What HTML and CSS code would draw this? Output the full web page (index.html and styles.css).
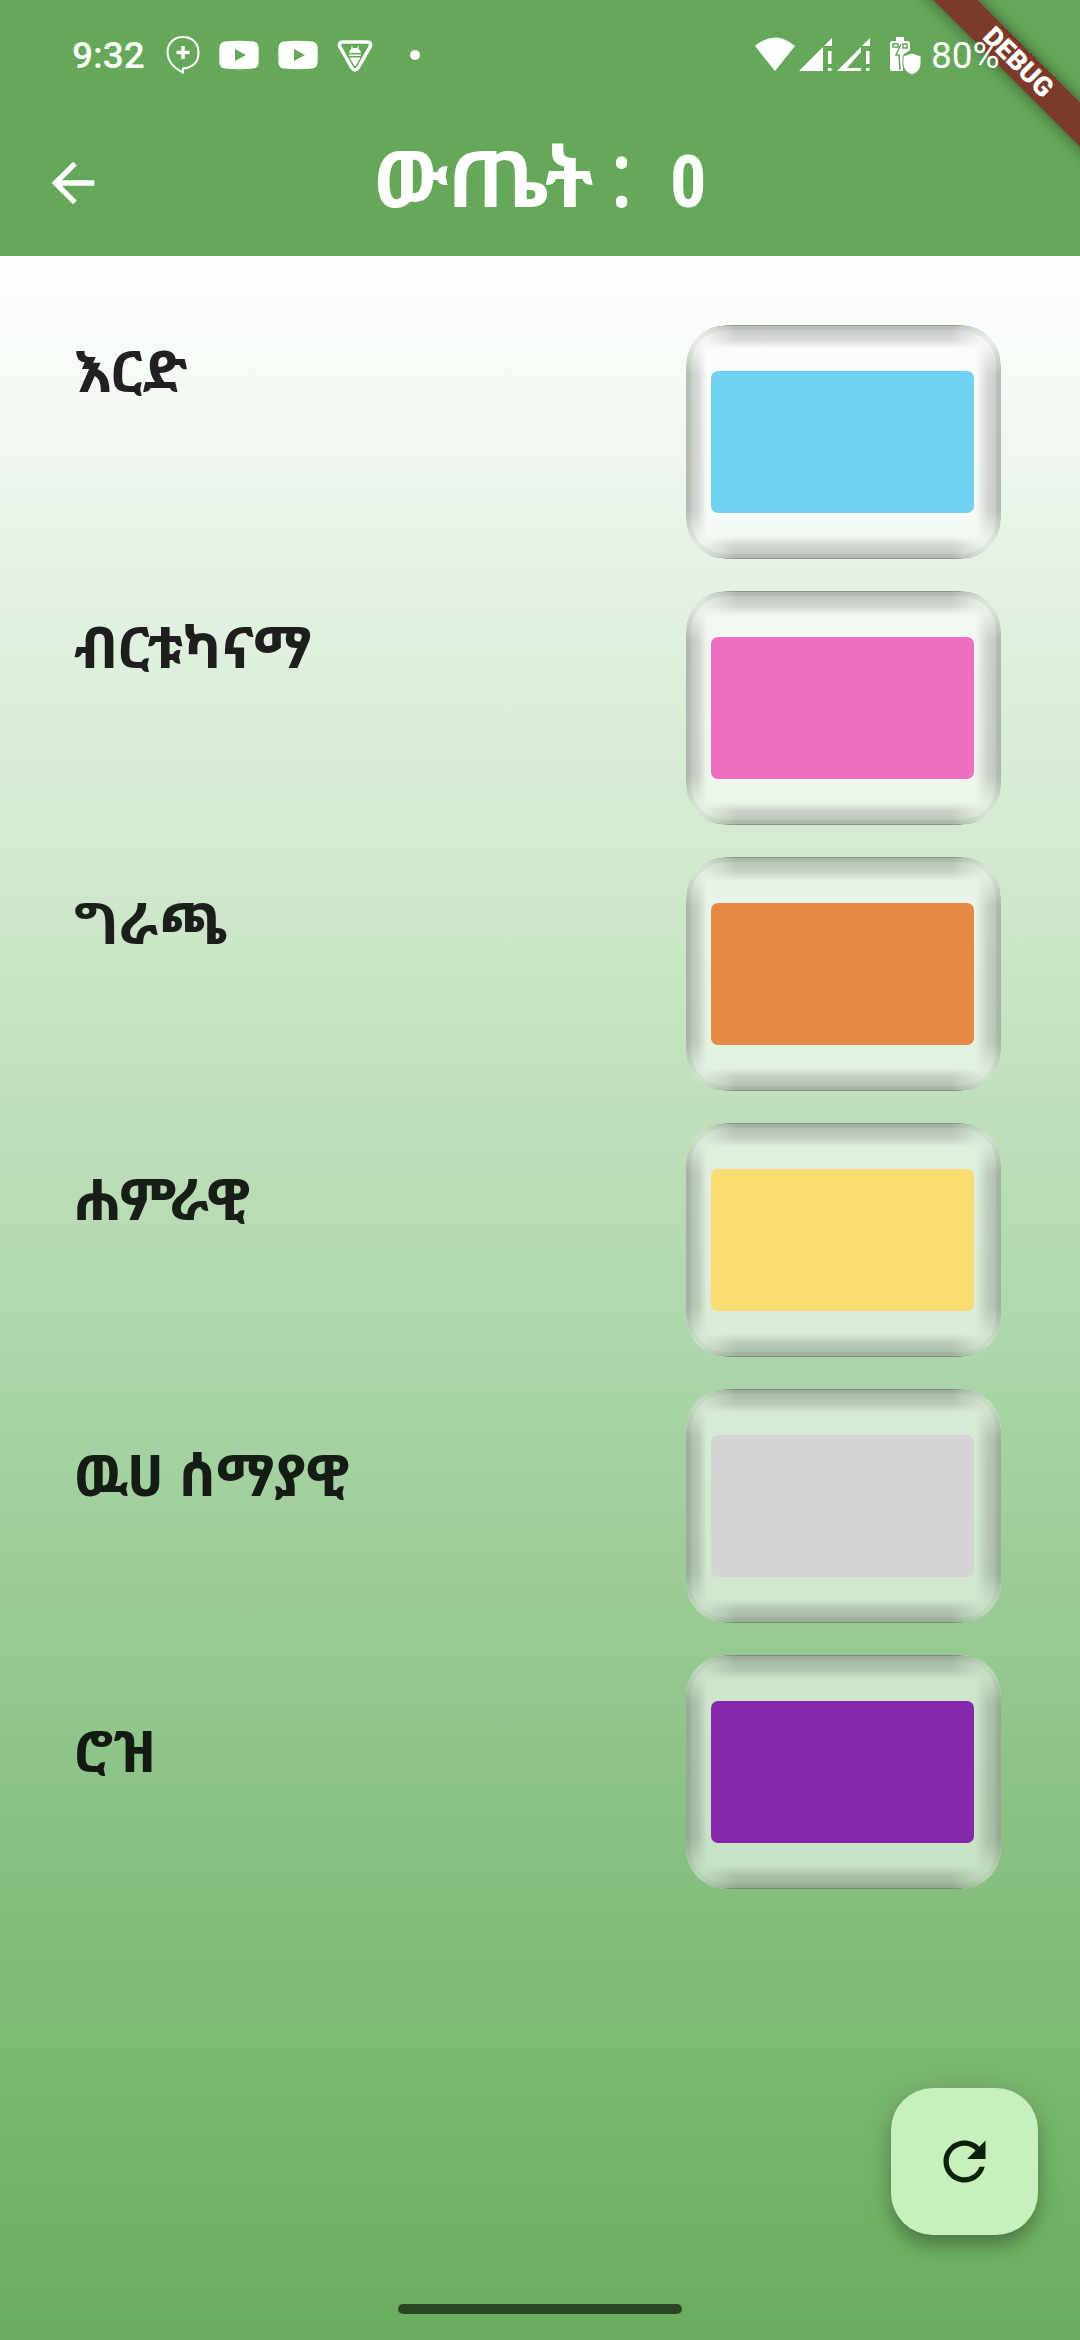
FILE: index.html
```
<!DOCTYPE html>
<html lang="am">
<head>
<meta charset="utf-8">
<meta name="viewport" content="width=device-width, initial-scale=1">
<title>ውጤት</title>
<link rel="stylesheet" href="styles.css">
</head>
<body>
<div class="screen">
  <header class="top">
    <div class="status">
      <span class="clock">9:32</span>
      <div class="notifications">
        <svg width="34" height="40" viewBox="0 0 34 40" fill="none" stroke="#fff" stroke-width="2"><path d="M17 37.500V33.500Q32.500 32 32.500 17.500C32.500 8 26 2 17 2S1.500 8 1.500 17.500Q2 30 17 37.500Z"/><path d="M17 11v13M10.500 17.500h13" stroke-width="3.500"/></svg>
        <svg width="40" height="40" viewBox="0 0 40 40" fill="#fff"><path fill-rule="evenodd" d="M6 6.500Q20 5 34 6.500Q39 7 39.500 12Q40 20 39.500 28Q39 33 34 33.500Q20 35 6 33.500Q1 33 .5 28Q0 20 .5 12Q1 7 6 6.500ZM16 14v12l11-6Z"/></svg>
        <svg width="40" height="40" viewBox="0 0 40 40" fill="#fff"><path fill-rule="evenodd" d="M6 6.500Q20 5 34 6.500Q39 7 39.500 12Q40 20 39.500 28Q39 33 34 33.500Q20 35 6 33.500Q1 33 .5 28Q0 20 .5 12Q1 7 6 6.500ZM16 14v12l11-6Z"/></svg>
        <svg width="36" height="40" viewBox="0 0 36 40"><path d="M6 7H30Q35 7 33 12L21 33Q18 37 15 33L3 12Q1 7 6 7Z" fill="none" stroke="#fff" stroke-width="3.500"/><path d="M12 18Q13 13 18 13T24 18ZM12 19.500h12v1.500H12ZM12.500 22.500h11L18.500 31h-1Z" fill="#fff"/><path d="M15 11v3M21 11v3" stroke="#fff"/></svg>
        <svg class="more" width="10" height="10" viewBox="0 0 10 10"><circle cx="5" cy="5" r="5" fill="#fff"/></svg>
      </div>
      <div class="system">
        <svg width="40" height="40" viewBox="0 0 40 40"><path d="M0 11Q20-6 40 11L20 36Z" fill="#fff"/></svg>
        <svg width="34" height="40" viewBox="0 0 34 40" fill="#fff"><path d="M0 36 24 12V36ZM25 11 33 3V11ZM29 16h3.500v13H29ZM29 33h3.500v3H29Z"/></svg>
        <svg width="34" height="40" viewBox="0 0 34 40" fill="#fff"><path fill-rule="evenodd" d="M0 36 24 12V17L10 33H24V36ZM25 11 33 3V11ZM29 16h3.500v13H29ZM29 33h3.500v3H29Z"/></svg>
        <svg class="battery" width="32" height="40" viewBox="0 0 32 40"><path d="M3 6H7V2H15V6H18Q21 6 21 9V15L14 20V36H3Q1 36 1 33V9Q1 6 3 6Z" fill="#fff"/><path d="M4 9H9V12H4ZM14 9h4v4h-4ZM12 9 7 20H10L11 35" fill="none" stroke="#66a85a" stroke-width="1.500"/><path d="M23 18 32 21V29Q32 36 23 40Q14 36 14 29V21Z" fill="#fff" stroke="#66a85a"/></svg>
        <span class="level">80%</span>
      </div>
    </div>
    <div class="bar">
      <button class="back" type="button" aria-label="Back"><svg width="64" height="64" viewBox="0 0 24 24" fill="#fff"><path d="M20 11H7.830l5.590-5.590L12 4l-8 8 8 8 1.410-1.410L7.830 13H20v-2z"/></svg></button>
      <h1 class="title">ውጤት<span class="colon">:</span><span class="score">0</span></h1>
    </div>
  </header>
  <main class="board">
    <ul class="labels">
      <li>እርድ</li>
      <li>ብርቱካናማ</li>
      <li>ግራጫ</li>
      <li>ሐምራዊ</li>
      <li>ዉሀ ሰማያዊ</li>
      <li>ሮዝ</li>
    </ul>
    <ul class="cards">
      <li class="card"><div class="swatch sky"></div></li>
      <li class="card"><div class="swatch pink"></div></li>
      <li class="card"><div class="swatch orange"></div></li>
      <li class="card"><div class="swatch yellow"></div></li>
      <li class="card"><div class="swatch grey"></div></li>
      <li class="card"><div class="swatch purple"></div></li>
    </ul>
  </main>
  <button class="refresh" type="button" aria-label="Restart"><svg width="63" height="63" viewBox="0 0 24 24" fill="#0a2209"><path d="M17.650 6.350C16.200 4.900 14.210 4 12 4c-4.420 0-7.990 3.580-7.990 8s3.570 8 7.990 8c3.730 0 6.840-2.550 7.730-6h-2.080c-.82 2.330-3.040 4-5.650 4-3.310 0-6-2.690-6-6s2.690-6 6-6c1.660 0 3.140.69 4.220 1.780L13 11h7V4l-2.350 2.350z"/></svg></button>
  <div class="home-bar"></div>
  <div class="banner-corner"><span class="banner">DEBUG</span></div>
</div>
</body>
</html>
```

FILE: styles.css
```
* { box-sizing: border-box; }

body {
  margin: 0;
  font-family: Roboto, "Noto Sans", "Noto Sans Ethiopic", sans-serif;
}

ul { margin: 0; padding: 0; list-style: none; }

button { border: 0; padding: 0; background: none; }

svg { display: block; }

.screen {
  position: relative;
  display: flex;
  flex-direction: column;
  min-height: 100vh;
}

.top {
  background: #66a85a;
  color: #fff;
  padding-top: 35px;
  height: 256px;
}

.status {
  position: relative;
  z-index: 2;
  display: flex;
  align-items: center;
  height: 40px;
  padding: 0 75px 0 72px;
  font-size: 37px;
  font-weight: 500;
}

.clock { width: 94px; }

.notifications { display: flex; align-items: center; gap: 19px; }

.more { margin-left: 18px; }

.system { display: flex; align-items: center; gap: 4px; margin-left: auto; }

.battery { margin-left: 14px; }

.level { width: 74px; margin-left: 6px; font-weight: 400; }

.bar {
  display: grid;
  grid-template-columns: 1fr auto 1fr;
  align-items: center;
  height: 147px;
  margin-top: 34px;
  padding: 0 41px;
}

.back { justify-self: start; }

.title {
  display: flex;
  align-items: baseline;
  margin: 0;
  padding-bottom: 10px;
  font-size: 79px;
  line-height: 100px;
  font-weight: 700;
}

.colon {
  margin: 0 36px 0 16px;
  font-family: "Noto Sans", sans-serif;
  font-size: 92px;
  font-weight: 400;
}

.score {
  font-family: "Roboto Condensed", "Open Sans Condensed", "Noto Sans Condensed", Roboto, sans-serif;
  font-size: 72px;
}

.board {
  flex: 1;
  display: flex;
  justify-content: space-between;
  align-items: flex-start;
  padding: 69px 79px 0 74px;
  background: linear-gradient(#fff 0%, #e4f1e3 16%, #d2e9ce 29%, #a9d4a6 55%, #8bc285 74%, #69ae5c 100%);
}

.labels { color: rgba(0, 0, 0, 0.87); font-size: 58px; font-weight: 700; }

.labels li { height: 276px; line-height: 94px; }

.cards { display: flex; flex-direction: column; gap: 32px; }

.card {
  position: relative;
  width: 315px;
  height: 234px;
  padding: 46px 27px 46px 25px;
  border-radius: 40px;
  background: rgba(255, 255, 255, 0.54);
  box-shadow: inset 0 0 1px 5px rgba(110, 150, 110, 0.12);
  overflow: hidden;
}

.card::before,
.card::after {
  content: "";
  position: absolute;
  inset: 0;
  border-radius: 40px;
}

.card::before {
  border: solid rgba(0, 0, 0, 0.2);
  border-width: 1px 0;
  background: linear-gradient(rgba(0, 0, 0, 0.22), rgba(0, 0, 0, 0.14) 14px, transparent 23px, transparent 210px, rgba(0, 0, 0, 0.14) 219px, rgba(0, 0, 0, 0.22));
  mask-image: linear-gradient(90deg, transparent 10px, #000 50px, #000 265px, transparent 305px);
}

.card::after {
  background: linear-gradient(90deg, rgba(0, 0, 0, 0.22), rgba(0, 0, 0, 0.14) 12px, transparent 21px, transparent 290px, rgba(0, 0, 0, 0.14) 302px, rgba(0, 0, 0, 0.22));
  mask-image: linear-gradient(transparent 12px, #000 50px, #000 184px, transparent 222px);
}

.swatch { height: 142px; border-radius: 7px; }

.sky { background: #71d1f2; }
.pink { background: #ed6fc1; }
.orange { background: #e58945; }
.yellow { background: #f9dd71; }
.grey { background: #d4d4d4; }
.purple { background: #8428ac; }

.refresh {
  position: fixed;
  right: 42px;
  bottom: 105px;
  display: grid;
  place-items: center;
  width: 147px;
  height: 147px;
  border-radius: 42px;
  background: #c8f0bc;
  box-shadow: 0 12px 18px -2px rgba(0, 0, 0, 0.26), 0 4px 32px rgba(0, 0, 0, 0.14);
}

.home-bar {
  position: fixed;
  bottom: 26px;
  left: 50%;
  width: 284px;
  height: 10px;
  margin-left: -142px;
  border-radius: 5px;
  background: #2a4725;
}

.banner-corner {
  position: absolute;
  z-index: 1;
  top: 0;
  right: 0;
  width: 220px;
  height: 220px;
  overflow: hidden;
}

.banner {
  position: absolute;
  top: 47px;
  right: -88px;
  width: 300px;
  height: 31px;
  background: #7c3a2a;
  box-shadow: 0 0 16px rgba(0, 0, 0, 0.5);
  color: #fff;
  font-size: 27px;
  font-weight: 900;
  line-height: 31px;
  text-align: center;
  transform: rotate(45deg);
}
```
